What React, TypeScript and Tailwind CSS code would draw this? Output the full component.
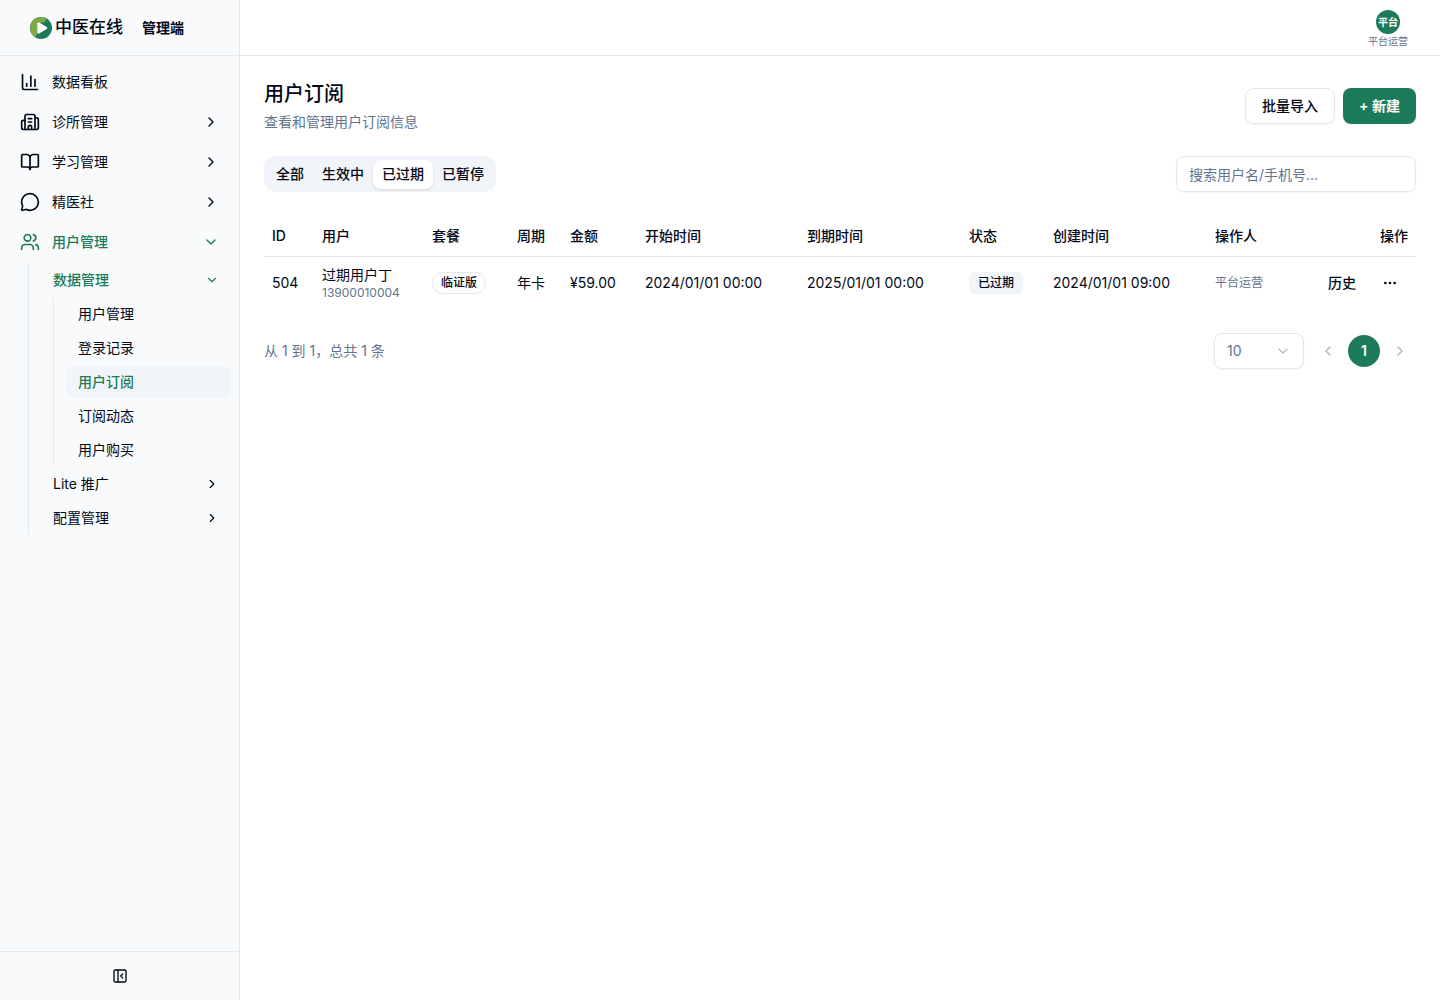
import type { ReactNode } from "react";
import {
  BookOpen,
  Building2,
  ChartColumn,
  ChevronDown,
  ChevronLeft,
  ChevronRight,
  Ellipsis,
  MessageCircle,
  PanelLeftClose,
  Users,
} from "lucide-react";

interface Subscription {
  id: number;
  name: string;
  phone: string;
  plan: string;
  period: string;
  amount: string;
  startAt: string;
  endAt: string;
  status: string;
  createdAt: string;
  operator: string;
}

const TABS = ["全部", "生效中", "已过期", "已暂停"];

const DATA_LINKS = ["用户管理", "登录记录", "用户订阅", "订阅动态", "用户购买"];

const COLUMNS = [
  { title: "ID", width: "w-[50px]" },
  { title: "用户", width: "w-[110px]" },
  { title: "套餐", width: "w-[85px]" },
  { title: "周期", width: "w-[53px]" },
  { title: "金额", width: "w-[75px]" },
  { title: "开始时间", width: "w-[162px]" },
  { title: "到期时间", width: "w-[162px]" },
  { title: "状态", width: "w-[84px]" },
  { title: "创建时间", width: "w-[162px]" },
  { title: "操作人", width: "w-[100px]" },
  { title: "操作", width: "w-[109px]" },
];

const ROWS: Subscription[] = [
  {
    id: 504,
    name: "过期用户丁",
    phone: "13900010004",
    plan: "临证版",
    period: "年卡",
    amount: "¥59.00",
    startAt: "2024/01/01 00:00",
    endAt: "2025/01/01 00:00",
    status: "已过期",
    createdAt: "2024/01/01 09:00",
    operator: "平台运营",
  },
];

function Logo() {
  return (
    <svg viewBox="0 0 22 22" className="size-[22px]" aria-hidden="true">
      <circle cx="11" cy="11" r="11" fill="#1d7a5a" />
      <path d="M15.5 1A11 11 0 0 0 5 20.2C6.500 19 7.200 17.500 7.200 15V6L13.500 5.500C15.500 4.500 16.200 3 15.500 1Z" fill="#7fab45" />
      <path
        d="M8.500 6.500v9l7.500-4.500z"
        fill="#fff"
        stroke="#fff"
        strokeWidth="2.5"
        strokeLinejoin="round"
      />
    </svg>
  );
}

function NavItem({
  icon,
  label,
  expandable = true,
  open = false,
}: {
  icon: ReactNode;
  label: string;
  expandable?: boolean;
  open?: boolean;
}) {
  return (
    <button
      type="button"
      className={`flex h-9 w-full items-center gap-3 rounded-lg px-3 text-sm ${
        open ? "font-medium text-[#1d7a5a]" : ""
      }`}
    >
      {icon}
      <span className="flex-1 text-left">{label}</span>
      {expandable && (open ? <ChevronDown className="size-4" /> : <ChevronRight className="size-4" />)}
    </button>
  );
}

function SubItem({ label, open = false }: { label: string; open?: boolean }) {
  return (
    <button
      type="button"
      className={`flex h-8 w-full items-center justify-between rounded-lg px-3 text-sm ${
        open ? "font-medium text-[#1d7a5a]" : ""
      }`}
    >
      {label}
      {open ? <ChevronDown className="size-3.5" /> : <ChevronRight className="size-3.5" />}
    </button>
  );
}

function Sidebar() {
  return (
    <aside className="flex w-60 shrink-0 flex-col border-r border-slate-200 bg-slate-50">
      <div className="flex h-14 items-center gap-[19px] border-b border-slate-200 pl-[30px]">
        <div className="flex items-center gap-[3px]">
          <Logo />
          <span className="text-[17px] font-medium">中医在线</span>
        </div>
        <span className="text-sm font-semibold">管理端</span>
      </div>

      <nav className="flex flex-1 flex-col gap-1 p-2">
        <NavItem icon={<ChartColumn className="size-5" />} label="数据看板" expandable={false} />
        <NavItem icon={<Building2 className="size-5" />} label="诊所管理" />
        <NavItem icon={<BookOpen className="size-5" />} label="学习管理" />
        <NavItem icon={<MessageCircle className="size-5" />} label="精医社" />
        <NavItem icon={<Users className="size-5" />} label="用户管理" open />
        <div className="ml-5 flex flex-col gap-0.5 border-l border-slate-200 pl-3">
          <SubItem label="数据管理" open />
          <div className="ml-3 flex flex-col gap-0.5 border-l border-slate-200 pl-3">
            {DATA_LINKS.map((label) => (
              <a
                key={label}
                href="#"
                className={`flex h-8 items-center rounded-lg px-3 text-sm ${
                  label === "用户订阅" ? "bg-slate-100 font-medium text-[#1d7a5a]" : ""
                }`}
              >
                {label}
              </a>
            ))}
          </div>
          <SubItem label="Lite 推广" />
          <SubItem label="配置管理" />
        </div>
      </nav>

      <div className="flex h-[49px] items-center justify-center border-t border-slate-200">
        <button type="button" aria-label="收起侧边栏" className="flex size-8 items-center justify-center">
          <PanelLeftClose className="size-4" />
        </button>
      </div>
    </aside>
  );
}

function SubscriptionTable() {
  return (
    <div className="mt-6 overflow-x-auto">
      <table className="w-full min-w-[1100px] table-fixed text-left text-sm">
        <thead>
          <tr className="border-b border-slate-200">
            {COLUMNS.map((c) => (
              <th
                key={c.title}
                className={`h-10 px-2 font-medium ${c.width} ${c.title === "操作" ? "text-right" : ""}`}
              >
                {c.title}
              </th>
            ))}
          </tr>
        </thead>
        <tbody>
          {ROWS.map((r) => (
            <tr key={r.id} className="whitespace-nowrap">
              <td className="p-2">{r.id}</td>
              <td className="p-2">
                <div>{r.name}</div>
                <div className="text-xs text-slate-500">{r.phone}</div>
              </td>
              <td className="p-2">
                <span className="inline-flex h-[22px] items-center rounded-full border border-slate-200 px-2 text-xs font-medium">
                  {r.plan}
                </span>
              </td>
              <td className="p-2">{r.period}</td>
              <td className="p-2">{r.amount}</td>
              <td className="p-2">{r.startAt}</td>
              <td className="p-2">{r.endAt}</td>
              <td className="p-2">
                <span className="inline-flex h-[22px] items-center rounded-md border border-transparent bg-slate-100 px-2 text-xs font-medium">
                  {r.status}
                </span>
              </td>
              <td className="p-2">{r.createdAt}</td>
              <td className="p-2 text-xs text-slate-500">{r.operator}</td>
              <td className="p-2">
                <div className="flex items-center justify-end gap-1">
                  <button type="button" className="h-8 px-3 font-medium">
                    历史
                  </button>
                  <button type="button" aria-label="更多" className="flex h-8 w-9 items-center justify-center">
                    <Ellipsis className="size-4" />
                  </button>
                </div>
              </td>
            </tr>
          ))}
        </tbody>
      </table>
    </div>
  );
}

function Pagination() {
  return (
    <div className="mt-6 flex items-center justify-between text-sm text-slate-500">
      <p>从 1 到 1，总共 1 条</p>
      <div className="flex items-center gap-2">
        <div className="grid w-[90px] items-center">
          <select
            aria-label="每页条数"
            className="col-start-1 row-start-1 h-9 w-full appearance-none rounded-lg border border-slate-200 bg-white px-3 shadow-xs"
          >
            <option>10</option>
            <option>20</option>
            <option>50</option>
          </select>
          <ChevronDown className="pointer-events-none col-start-1 row-start-1 mr-[13px] size-4 justify-self-end opacity-50" />
        </div>
        <div className="flex items-center gap-1">
          <button
            type="button"
            disabled
            aria-label="上一页"
            className="flex size-8 items-center justify-center text-slate-950 opacity-30"
          >
            <ChevronLeft className="size-4" />
          </button>
          <button type="button" className="size-8 rounded-full bg-[#1d7a5a] font-semibold text-white">
            1
          </button>
          <button
            type="button"
            disabled
            aria-label="下一页"
            className="flex size-8 items-center justify-center text-slate-950 opacity-30"
          >
            <ChevronRight className="size-4" />
          </button>
        </div>
      </div>
    </div>
  );
}

export default function App() {
  return (
    <div className="flex min-h-screen bg-white font-[Inter,'Noto_Sans_CJK_SC',sans-serif] text-[#020817]">
      <Sidebar />
      <div className="flex min-w-0 flex-1 flex-col">
        <header className="flex h-14 items-center justify-end border-b border-slate-200 px-8">
          <button type="button" className="flex flex-col items-center gap-0.5 text-[10px] leading-none">
            <span className="flex size-6 items-center justify-center rounded-full bg-[#1d7a5a] font-semibold text-white">
              平台
            </span>
            <span className="text-slate-500">平台运营</span>
          </button>
        </header>

        <main className="flex-1 p-6">
          <div className="flex items-center justify-between">
            <div>
              <h1 className="text-xl font-medium">用户订阅</h1>
              <p className="mt-1 text-sm text-slate-500">查看和管理用户订阅信息</p>
            </div>
            <div className="flex gap-2 text-sm">
              <button
                type="button"
                className="h-9 rounded-lg border border-slate-200 px-4 font-medium shadow-xs"
              >
                批量导入
              </button>
              <button type="button" className="h-9 rounded-lg bg-[#1d7a5a] px-4 font-semibold text-white">
                + 新建
              </button>
            </div>
          </div>

          <div className="mt-6 flex items-center justify-between">
            <div role="tablist" className="flex h-9 items-center rounded-[10px] bg-slate-100 p-[3px]">
              {TABS.map((tab) => (
                <button
                  key={tab}
                  type="button"
                  role="tab"
                  aria-selected={tab === "已过期"}
                  className={`h-[29px] rounded-lg border border-transparent px-2 text-sm font-medium ${
                    tab === "已过期" ? "bg-white shadow-sm" : ""
                  }`}
                >
                  {tab}
                </button>
              ))}
            </div>
            <input
              type="text"
              aria-label="搜索用户"
              placeholder="搜索用户名/手机号..."
              className="h-9 w-60 rounded-lg border border-slate-200 px-3 text-sm shadow-xs placeholder:text-slate-500"
            />
          </div>

          <SubscriptionTable />
          <Pagination />
        </main>
      </div>
    </div>
  );
}
